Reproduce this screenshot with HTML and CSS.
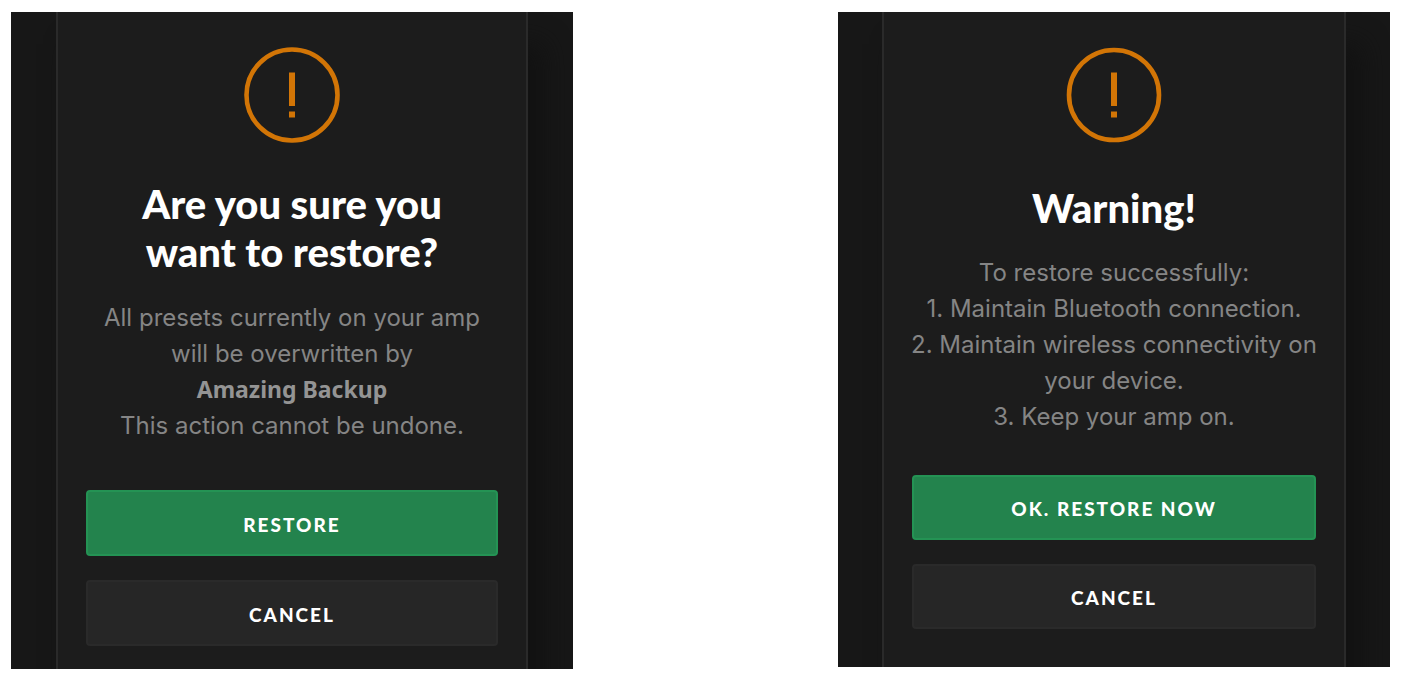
FILE: index.html
```html
<!DOCTYPE html>
<html lang="en">
<head>
    <meta charset="UTF-8">
    <meta name="viewport" content="width=device-width, initial-scale=1">
    <title>Restore Backup</title>
    <link rel="stylesheet" href="styles.css">
</head>
<body>
<main class="page">
    <section class="screen">
        <div class="dialog confirm" role="alertdialog" aria-labelledby="confirm-title">
            <svg class="icon" viewBox="0 0 96 96" aria-hidden="true">
                <circle cx="48" cy="48" r="45.5" fill="none" stroke="#d27506" stroke-width="4.6"/>
                <path d="M45 25.500h6v33.500h-6zM45 64.500h6v6h-6z" fill="#d27506"/>
            </svg>
            <h1 class="title" id="confirm-title">Are you sure you<br>want to restore?</h1>
            <p class="text">
                All presets currently on your amp<br>
                will be overwritten by<br>
                <strong class="backup-name">Amazing Backup</strong><br>
                This action cannot be undone.
            </p>
            <div class="actions">
                <button class="btn btn-primary" type="button">RESTORE</button>
                <button class="btn" type="button">CANCEL</button>
            </div>
        </div>
    </section>
    <section class="screen">
        <div class="dialog warning" role="alertdialog" aria-labelledby="warning-title">
            <svg class="icon" viewBox="0 0 96 96" aria-hidden="true">
                <circle cx="48" cy="48" r="45" fill="none" stroke="#d27506" stroke-width="4.6"/>
                <path d="M45 25.500h6v33.500h-6zM45 64.500h6v6h-6z" fill="#d27506"/>
            </svg>
            <h1 class="title" id="warning-title">Warning!</h1>
            <p class="text">
                To restore successfully:<br>
                1. Maintain Bluetooth connection.<br>
                2. Maintain wireless connectivity on<br>
                your device.<br>
                3. Keep your amp on.
            </p>
            <div class="actions">
                <button class="btn btn-primary" type="button">OK. RESTORE NOW</button>
                <button class="btn" type="button">CANCEL</button>
            </div>
        </div>
    </section>
</main>
</body>
</html>
```
FILE: styles.css
```css
* {
    margin: 0;
    padding: 0;
    box-sizing: border-box;
}

body {
    background: #fff;
    font-family: Inter, "Liberation Sans", sans-serif;
}

.page {
    display: grid;
    grid-template-columns: 562fr 552fr;
    column-gap: 265px;
    align-items: start;
    padding: 12px 16px 8px 11px;
}

.screen {
    padding: 0 45px;
    background: #171717;
    overflow: hidden;
}

.screen:last-child {
    padding: 0 44px;
}

.dialog {
    display: flex;
    flex-direction: column;
    align-items: center;
    padding: 35px 28px 23px;
    border: solid #2a2a2a;
    border-width: 0 2px;
    background: #1c1c1c;
    box-shadow: 16px 32px 24px #121212;
    text-align: center;
}

.icon {
    width: 96px;
    height: 96px;
}

.title {
    margin: 37px 0 24px;
    color: #fff;
    font-family: Lato, sans-serif;
    font-size: 40px;
    font-weight: 900;
    line-height: 48px;
}

.text {
    color: #858585;
    font-size: 24px;
    line-height: 36px;
    white-space: nowrap;
}

.backup-name {
    color: #949494;
    font-family: "Noto Sans", sans-serif;
    font-size: 23px;
    font-weight: 700;
    line-height: 1;
}

.actions {
    display: grid;
    gap: 24px;
    width: 100%;
    margin-top: 46px;
}

.btn {
    height: 66px;
    padding-top: 2px;
    border: 2px solid #2a2a2a;
    border-radius: 4px;
    background: #262626;
    color: #fff;
    font-family: Lato, sans-serif;
    font-size: 19px;
    font-weight: 900;
    letter-spacing: 2px;
    cursor: pointer;
}

.btn-primary {
    border-color: #249354;
    background: #23834d;
}

.warning {
    padding-bottom: 38px;
}

.warning .title {
    margin: 41px 0 23px;
}

.warning .actions {
    margin-top: 40px;
}

.warning .btn {
    height: 65px;
}
```
